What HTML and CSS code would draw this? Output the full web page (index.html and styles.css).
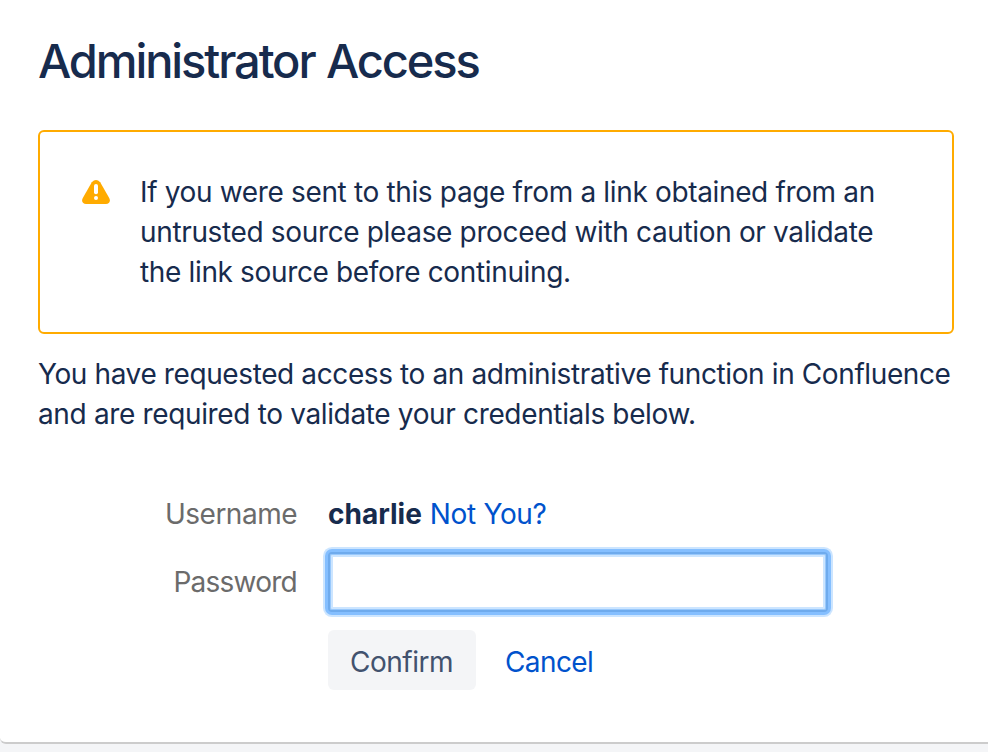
FILE: index.html
```html
<!DOCTYPE html>
<html lang="en">
<head>
<meta charset="utf-8">
<title>Administrator Access</title>
<link rel="stylesheet" href="styles.css">
</head>
<body>
<main class="panel">
  <h1>Administrator Access</h1>
  <div class="warning">
    <svg class="warning-icon" viewBox="0 0 28 24" aria-hidden="true"><path fill="#ffab00" d="M9.8 2.3Q14-2.3 18.2 2.3L27.2 18C29 21.6 27 24 24 24H4C1 24-1 21.6.8 18Z"/><path d="M14 6V12.2" stroke="#fff" stroke-width="4" stroke-linecap="round"/><circle cx="14" cy="18" r="2" fill="#fff"/></svg>
    <p class="warning-text">If you were sent to this page from a link obtained from an<br>untrusted source please proceed with caution or validate<br>the link source before continuing.</p>
  </div>
  <p class="intro">You have requested access to an administrative function in Confluence<br><span class="intro-end">and are required to validate your credentials below.</span></p>
  <form class="form">
    <div class="row row-user"><span class="label">Username</span><div class="value"><strong>charlie</strong><a class="not-you">Not You?</a></div></div>
    <div class="row row-pass"><label class="label label-password" for="password">Password</label><input class="field" id="password" type="password"></div>
    <div class="actions"><button class="confirm" type="button">Confirm</button><a class="cancel">Cancel</a></div>
  </form>
</main>
</body>
</html>
```
FILE: styles.css
```css
* { box-sizing: border-box; }
body { margin: 0; height: 752px; overflow: hidden; background: #f4f5f7; color: #172b4d; font: 28px/40px Inter, sans-serif; letter-spacing: -.35px; }
.panel { height: 744px; background: #fff; border-bottom: 2px solid #ccc; border-bottom-left-radius: 6px; padding: 33px 34px 0 38px; }
h1 { margin: 0 0 41px; font-size: 47px; line-height: 56px; font-weight: 500; letter-spacing: -2.1px; word-spacing: 1px; white-space: nowrap; }
p { margin: 0; white-space: nowrap; }
.warning { height: 204px; border: 2px solid #ffab00; border-radius: 6px; padding: 40px 42px; display: flex; gap: 30px; }
.warning-icon { width: 28px; height: 24px; margin-top: 8px; flex: none; }
.intro { margin-top: 20px; letter-spacing: -.39px; }
.intro-end { letter-spacing: -.35px; }
.form { margin: 60px 0 0; }
.row { display: flex; align-items: center; }
.label { width: 260px; padding-right: 1px; margin-right: 30px; text-align: right; color: #6b6b6b; letter-spacing: -.5px; }
.label-password { letter-spacing: -.75px; }
.row-user { height: 40px; }
.value { display: flex; gap: 8px; }
.value strong { letter-spacing: 0; }
.row-pass { height: 60px; margin-top: 18px; }
.field { width: 500px; height: 60px; border: 2px solid #6fabed; border-radius: 4px; outline: none; box-shadow: 0 0 0 3px #85bfff, 0 0 0 5px #cce5ff, inset 0 0 0 1px #99c9fc, inset 0 0 0 3px #cce5ff; }
.actions { display: flex; margin: 18px 0 0 290px; height: 60px; align-items: center; }
.confirm { width: 148px; height: 60px; border: 0; padding: 4px 1px 0 0; border-radius: 6px; background: #f4f5f7; color: #42526e; font: inherit; letter-spacing: -.5px; }
a { color: #0052cc; }
.cancel { margin: 4px 0 0 29px; letter-spacing: -.6px; }
```
